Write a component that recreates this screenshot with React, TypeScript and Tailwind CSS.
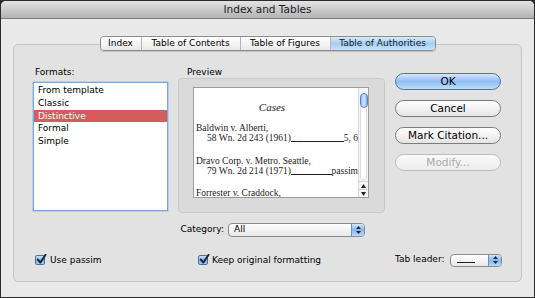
import React from "react";

const ui = "font-['DejaVu_Sans',sans-serif]";

function Check({ label, gap }: { label: string; gap: string }) {
  return (
    <div className="flex items-center">
      <span className="relative flex h-[10px] w-[10px] items-center justify-center rounded-[2px] border border-[#4d6f9c] bg-gradient-to-b from-[#cfe2f7] via-[#7fb0e6] to-[#a9cdf3]">
        <svg width="11" height="11" viewBox="0 0 11 11" className="absolute -top-[2px] left-[0px]">
          <path d="M1.8 5.6 L4.3 8.6 L9.6 0.8" fill="none" stroke="#16253a" strokeWidth="1.9" strokeLinecap="round" strokeLinejoin="round" />
        </svg>
      </span>
      <span className={`${gap} text-[9px] leading-[12px]`}>{label}</span>
    </div>
  );
}

function Arrows() {
  return (
    <span className="flex h-full w-[13px] flex-col items-center justify-center gap-[2px] border-l border-[#6c8fbf] bg-gradient-to-b from-[#d4e6f9] via-[#86b6eb] to-[#bcdaf8]">
      <svg width="5" height="3" viewBox="0 0 5 3"><path d="M0 3 L2.5 0 L5 3 Z" fill="#1c2a3c" /></svg>
      <svg width="5" height="3" viewBox="0 0 5 3"><path d="M0 0 L2.5 3 L5 0 Z" fill="#1c2a3c" /></svg>
    </span>
  );
}

function Button({ children, kind }: { children: React.ReactNode; kind?: "default" | "disabled" }) {
  const base = "flex h-[17px] items-center justify-center rounded-full border text-[10.5px] leading-none";
  if (kind === "default")
    return <div className={`${base} border-[#4c72ad] bg-gradient-to-b from-[#d5e7fa] via-[#8fbff1] to-[#bfdcfa] text-black`}>{children}</div>;
  if (kind === "disabled")
    return <div className={`${base} border-[#bdbdbd] bg-gradient-to-b from-[#fafafa] to-[#ececec] text-[#a9a9a9]`}>{children}</div>;
  return <div className={`${base} border-[#7c7c7c] bg-gradient-to-b from-[#ffffff] via-[#f2f2f2] to-[#e4e4e4] text-black`}>{children}</div>;
}

function Leader({ left, right }: { left: string; right: string }) {
  return (
    <div className="flex items-end pl-[11px]">
      <span className="whitespace-nowrap">{left}</span>
      <span className="mb-[2px] flex-1 border-b border-[#222]" />
      <span className="whitespace-nowrap">{right}</span>
    </div>
  );
}

export default function App() {
  const formats = ["From template", "Classic", "Distinctive", "Formal", "Simple"];
  const tabs = [
    { name: "Index", w: "w-[40px]" },
    { name: "Table of Contents", w: "w-[99px]" },
    { name: "Table of Figures", w: "w-[90px]" },
    { name: "Table of Authorities", w: "w-[105px]" },
  ];

  return (
    <div className={`h-[298px] w-[535px] bg-[#2b2b2b] p-px text-black ${ui}`}>
      <div className="flex h-full flex-col overflow-hidden rounded-t-[5px] bg-[#e9e9e9]">
        <div className="flex h-[18px] items-center justify-center border-b border-[#7f7f7f] bg-gradient-to-b from-[#e4e4e4] to-[#b3b3b3] text-[10.5px] text-[#1a1a1a]">
          Index and Tables
        </div>

        <div className="flex flex-1 flex-col px-[12px] pt-[17px] pb-[15px]">
          {/* tabs */}
          <div className="relative z-10 mx-auto flex h-[15px] overflow-hidden rounded-[4px] border border-[#8d8d8d] shadow-[0_1px_1px_rgba(0,0,0,0.15)]">
            {tabs.map((t, i) => (
              <div
                key={t.name}
                className={`${t.w} flex items-center justify-center text-[9px] ${i > 0 ? "border-l border-[#b4b4b4]" : ""} ${
                  i === 3
                    ? "bg-gradient-to-b from-[#d9eafb] via-[#a6cdf4] to-[#c9e2fb] text-[#0e1a2a]"
                    : "bg-gradient-to-b from-[#ffffff] to-[#e9e9e9]"
                }`}
              >
                {t.name}
              </div>
            ))}
          </div>

          {/* group box */}
          <div className="-mt-[7px] flex flex-1 flex-col rounded-[5px] border border-[#c4c4c4] bg-[#e2e2e2] pt-[21px] pl-[19px]">
            <div className="flex items-start">
              {/* formats */}
              <div className="w-[135px]">
                <div className="h-[12px] pl-[2px] text-[9px] leading-[12px]">Formats:</div>
                <div className="mt-[4px] h-[129px] border border-[#7ea5d6] bg-white pt-px ring-1 ring-[#b7cfec]">
                  {formats.map((f) => (
                    <div
                      key={f}
                      className={`h-[12.75px] pl-[4px] text-[9px] leading-[12.75px] ${f === "Distinctive" ? "bg-[#d55c5c] text-white" : ""}`}
                    >
                      {f}
                    </div>
                  ))}
                </div>
              </div>

              {/* preview */}
              <div className="ml-[10px] w-[207px]">
                <div className="h-[12px] pl-[9px] text-[9px] leading-[12px]">Preview</div>
                <div className="h-[135px] rounded-[4px] border border-[#c9c9c9] bg-[#dadada] pt-[8px] pl-[14px]">
                  <div className="flex h-[111px] w-[176px] border border-[#9c9c9c] bg-white">
                    <div className="flex-1 overflow-hidden pt-[12px] pl-[2px] font-['Liberation_Serif',serif] text-[9.5px] leading-[10.5px] text-[#1a1a1a]">
                      <div className="h-[14px] pr-[10px] text-center text-[11px] italic leading-[14px]">Cases</div>
                      <div className="mt-[8.75px]">Baldwin v. Alberti,</div>
                      <Leader left="58 Wn. 2d 243 (1961)" right="5, 6" />
                      <div className="mt-[12px]">Dravo Corp. v. Metro. Seattle,</div>
                      <Leader left="79 Wn. 2d 214 (1971)" right="passim" />
                      <div className="mt-[11px] whitespace-nowrap">Forrester v. Craddock,</div>
                    </div>
                    <div className="flex w-[10px] flex-col items-center border-l border-[#d8d8d8] bg-[#f6f6f6]">
                      <div className="mt-[5px] h-[15px] w-[8px] rounded-full border border-[#5b82bb] bg-gradient-to-r from-[#8fbaf0] via-[#d4e7fb] to-[#7eaee8]" />
                      <div className="mb-[1px] w-[7px] flex-1 rounded-b-full border-x border-b border-[#dedede] bg-white" />
                      <div className="flex h-[8px] w-full items-center justify-center border-t border-[#d0d0d0]">
                        <svg width="5" height="4" viewBox="0 0 5 4"><path d="M0 4 L2.5 0 L5 4 Z" fill="#222" /></svg>
                      </div>
                      <div className="flex h-[8px] w-full items-center justify-center border-t border-[#d0d0d0]">
                        <svg width="5" height="4" viewBox="0 0 5 4"><path d="M0 0 L2.5 4 L5 0 Z" fill="#222" /></svg>
                      </div>
                    </div>
                  </div>
                </div>
              </div>

              {/* buttons */}
              <div className="ml-[10px] flex w-[106px] flex-col gap-[10px] pt-[7px]">
                <Button kind="default">OK</Button>
                <Button>Cancel</Button>
                <Button>Mark Citation...</Button>
                <Button kind="disabled">Modify...</Button>
              </div>
            </div>

            {/* category */}
            <div className="mt-[10px] flex h-[14px] items-center pl-[145px]">
              <span className="w-[46px] text-right text-[9px]">Category:</span>
              <div className="ml-[4px] flex h-[14px] w-[137px] items-center overflow-hidden rounded-[4px] border border-[#8a8a8a] bg-gradient-to-b from-[#ffffff] to-[#e8e8e8]">
                <span className="flex-1 pl-[5px] text-[9px]">All</span>
                <Arrows />
              </div>
            </div>

            {/* bottom row */}
            <div className="mt-[16px] flex h-[14px] items-center">
              <div className="w-[163px] pl-[2px]">
                <Check label="Use passim" gap="ml-[5px]" />
              </div>
              <div className="w-[199px] pl-[2px]">
                <Check label="Keep original formatting" gap="ml-[4px]" />
              </div>
              <span className="w-[55px] text-[9px]">Tab leader:</span>
              <div className="flex h-[13px] w-[52px] items-center overflow-hidden rounded-[4px] border border-[#8a8a8a] bg-gradient-to-b from-[#ffffff] to-[#e8e8e8]">
                <span className="ml-[6px] mt-[4px] w-[18px] border-b border-[#222]" />
                <span className="flex-1" />
                <Arrows />
              </div>
            </div>
          </div>
        </div>
      </div>
    </div>
  );
}
